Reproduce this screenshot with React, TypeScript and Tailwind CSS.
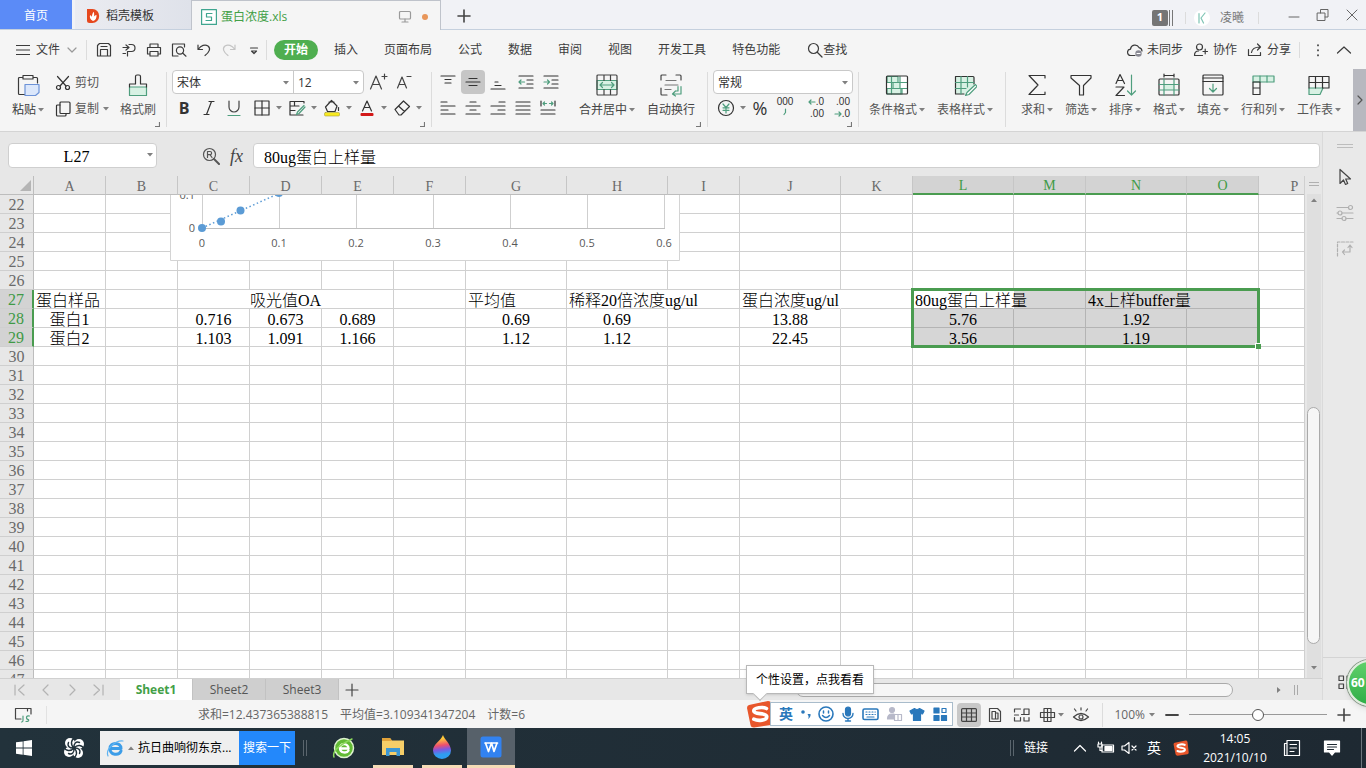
import React, { useState } from 'react';
import clsx from 'clsx';

const sheetFont = "font-['Liberation_Serif','Noto_Sans_CJK_SC',serif]";

interface SvgProps {
  w?: number;
  h?: number;
  children: React.ReactNode;
  className?: string;
}

const Svg: React.FC<SvgProps> = ({ w = 16, h = 16, children, className }) => (
  <svg
    width={w}
    height={h}
    viewBox={`0 0 ${w} ${h}`}
    fill="none"
    stroke="currentColor"
    strokeWidth="1.2"
    strokeLinecap="round"
    strokeLinejoin="round"
    aria-hidden="true"
    className={clsx('shrink-0', className)}
  >
    {children}
  </svg>
);

const Caret = ({ className }: { className?: string }) => (
  <svg width="6" height="4" viewBox="0 0 6 4" className={clsx('shrink-0', className)} aria-hidden="true">
    <path d="M0 0h6L3 3.6z" fill="#808080" />
  </svg>
);

const green = '#4f9e7e';
const mint = '#d8f1e4';

const Divider = ({ className }: { className?: string }) => (
  <div className={clsx('w-px shrink-0 bg-[#dcdcdc]', className)} />
);

// ---------- title bar ----------

const SogouLogo = ({ size }: { size: number }) => (
  <svg width={size} height={size} viewBox="0 0 28 28" className="shrink-0" aria-hidden="true">
    <path d="M3 5 22 1q3 0 3.400 2.500L27.500 22q0 2.500-2.500 3L8 27.500q-3 0-3.500-2.500L1 8q0-2.500 2-3z" fill="#e8562b" />
    <path
      d="M20.500 8.500C17 6.600 7.500 7.400 7.800 11c.4 3.800 12.800 1.400 13 5.600.2 4-8.800 4.600-13 2.600"
      fill="none"
      stroke="#fff"
      strokeWidth="3.600"
      strokeLinecap="round"
    />
  </svg>
);

const TitleBar = () => (
  <header className="flex h-[30px] shrink-0 items-stretch border-b border-[#c5d0de] bg-[#f1f2f6] text-xs text-[#333]">
    <button className="w-[72px] bg-[#5b8bf7] pt-0.5 text-white">首页</button>
    <button className="ml-[3px] flex w-[116px] items-center gap-1 bg-gradient-to-r from-[#ebecf1] to-[#dfe2ea] pt-0.5 pl-[11px]">
      <Svg className="stroke-none">
        <path d="M2 1h5.500a6.500 6.800 0 0 1 0 14H4.500A2.500 2.500 0 0 1 2 12.500z" transform="translate(-1)" fill="#e6481e" />
        <path d="M7 13C4 11.500 3.500 9 4 7.300c1.200.4 1.800 1 2 2C5.800 7 6.500 5 7.800 3.700c.5 2 .5 3.500 0 5 .8-1 1.500-1.500 2.700-1.700C10.800 10 9.500 12.400 7 13z" fill="#fff" />
      </Svg>
      稻壳模板
    </button>
    <div className="-mb-px flex w-[250px] items-center border-x border-t border-[#bfc3cb] bg-[#f5f5f5] pt-0.5 pl-[9px] text-[#43a047]">
      <Svg className="text-[#3fa58f]">
        <rect x=".6" y=".6" width="14.800" height="14.800" fill="#fff" />
        <path d="M11 4.500H5.500v3.500h5v3.500H5" />
      </Svg>
      <span className="ml-1">蛋白浓度.xls</span>
      <Svg w={14} h={13} className="ml-auto text-[#9a9a9a]">
        <rect x="1.500" y="1.500" width="11" height="7.500" rx="1" />
        <path d="M7 9v2.500M4 12h6" />
      </Svg>
      <span className="mr-3 ml-2.5 size-1.5 rounded-full bg-[#e8965a]" />
    </div>
    <button aria-label="新建" className="ml-[15px] flex items-center pt-0.5">
      <Svg className="text-[#444]">
        <path d="M2 8h12M8 2v12" strokeWidth="1.600" />
      </Svg>
    </button>
    <div className="mt-1.5 ml-auto flex items-center text-[#777]">
      <span className="flex h-4 w-4 items-center justify-center rounded-xs bg-[#757575] text-[11px] font-bold text-white">1</span>
      <span className="ml-px h-4 w-1 border-x border-[#777]" />
      <Divider className="mr-2 ml-3 h-3" />
      <Svg>
        <circle cx="8" cy="8" r="8" fill="#fff" stroke="none" />
        <path d="M5 3.500v9.500M11 3 7 8l2.500 5" stroke="#7ec4b4" />
      </Svg>
      <span className="ml-2.5">凌曦</span>
      <Divider className="ml-3.5 h-3" />
    </div>
    <div className="flex items-center gap-[15px] pr-[7px] pl-7 text-[#666]">
      <button aria-label="最小化">
        <Svg w={14} h={14}>
          <path d="M2 9h10" strokeWidth="1" />
        </Svg>
      </button>
      <button aria-label="还原">
        <Svg w={14} h={14}>
          <path d="M1.500 5h7.500v7.500H1.500zM4.500 5V1.500H12V9H9" strokeWidth="1" />
        </Svg>
      </button>
      <button aria-label="关闭">
        <Svg w={14} h={14}>
          <path d="m2 2 10 10M12 2 2 12" strokeWidth="1" />
        </Svg>
      </button>
    </div>
  </header>
);

// ---------- menu row ----------

const quickTools = [
  { label: '保存', icon: <><path d="M1.500 14V3.500l2-2h9l2 2V14zM4.500 14V7.500h7V14M5 4.500h6" /></> },
  { label: '输出为PDF', icon: <><path d="M2 5.500h5M5 3 8 5.500 5 8M8 2.500h2.500a3.500 3.500 0 0 1 0 7H6.500V14M2 11.500h2.500" /></> },
  { label: '打印', icon: <><path d="M4 5.500V2h8v3.500M4 12H1.500V5.500h13V12H12M4 9.500h8v4.500H4z" /></> },
  { label: '打印预览', icon: <><path d="M7 14H1.500V2h12v3" /><circle cx="9" cy="8.500" r="3.600" /><path d="m11.600 11 3.400 3.200" /></> },
  { label: '撤销', icon: <path d="M2 3v4.500h4.500M2.500 7C5 3.500 9 2 12 4c3 2.500 1.500 6-3 9.500" /> },
  { label: '恢复', icon: <path stroke="#c4c4c4" d="M14 3v4.500H9.500M13.500 7C11 3.500 7 2 4 4c-3 2.500-1.500 6 3 9.500" /> },
  { label: '自定义', icon: <path d="M4.500 6h7M5.500 9 8 11.500 10.500 9z" /> },
];

const menus = ['插入', '页面布局', '公式', '数据', '审阅', '视图', '开发工具', '特色功能'];

const MenuRow = () => (
  <nav className="flex h-[38px] shrink-0 items-center pt-0.5 text-xs whitespace-nowrap text-[#3c3c3c]">
    <button className="flex items-center pl-4">
      <Svg w={14}>
        <path d="M0 3.500h14M0 8h14M0 12.500h14" />
      </Svg>
      <span className="mx-1.5">文件</span>
      <Svg w={12} h={8} className="text-[#999]">
        <path d="m2 2 4 4 4-4" />
      </Svg>
    </button>
    <Divider className="ml-2 h-5" />
    <div className="flex pl-1">
      {quickTools.map(tool => (
        <button key={tool.label} aria-label={tool.label} className="flex w-[25px] justify-center">
          <Svg>{tool.icon}</Svg>
        </button>
      ))}
    </div>
    <Divider className="h-5" />
    <button className="ml-[7px] h-5 w-11 rounded-full bg-[#4fae50] font-bold text-white">开始</button>
    <div className="flex pl-[3px]">
      {menus.map(menu => (
        <button key={menu} className="px-[13px]">{menu}</button>
      ))}
    </div>
    <button className="ml-3.5 flex items-center">
      <Svg>
        <circle cx="6.500" cy="6.500" r="5" />
        <path d="m10.500 10.500 4.500 4.500" />
      </Svg>
      查找
    </button>
    <div className="ml-auto flex items-center gap-2.5">
      <button className="flex items-center gap-1">
        <Svg>
          <path d="M8 13.500H4a3.200 3.200 0 0 1-.5-6.400A4.500 4.500 0 0 1 12 5.600a3.800 3.800 0 0 1 3 3.400" />
          <circle cx="11.500" cy="11.500" r="3.200" fill="#8a8a94" stroke="none" />
          <path d="M10 11.500h3" stroke="#fff" />
        </Svg>
        未同步
      </button>
      <button className="flex items-center gap-1">
        <Svg>
          <circle cx="6.500" cy="5" r="3" />
          <path d="M9.500 13.500H1.500c0-3 2-4.500 4-4.500M10 9.500h4.500M12.200 7.200v4.600" />
        </Svg>
        协作
      </button>
      <button className="flex items-center gap-1">
        <Svg>
          <path d="M1.500 7.500v6h12v-3M4.500 10.500c.5-3.500 3-5.500 8.500-5.500M10.500 2 13.500 5l-3 3" />
        </Svg>
        分享
      </button>
    </div>
    <Divider className="ml-2 h-4" />
    <button aria-label="更多" className="ml-2.5">
      <Svg>
        <path d="M8 3v.5M8 8v.5M8 13v.5" strokeWidth="1.700" />
      </Svg>
    </button>
    <button aria-label="收起功能区" className="mr-3.5 ml-2.5">
      <Svg>
        <path d="m1.500 11 6.500-6 6.500 6" />
      </Svg>
    </button>
  </nav>
);

// ---------- ribbon ----------

interface BigButtonProps {
  label: string;
  caret?: boolean;
  children: React.ReactNode;
}

const BigButton: React.FC<BigButtonProps> = ({ label, caret, children }) => (
  <button className="flex shrink-0 flex-col items-center pt-[5px]">
    <Svg w={24} h={24}>{children}</Svg>
    <span className="mt-[5px] flex items-center gap-0.5 leading-4">
      {label}
      {caret && <Caret />}
    </span>
  </button>
);

interface ToolProps {
  label: string;
  caret?: boolean;
  active?: boolean;
  children: React.ReactNode;
}

const Tool: React.FC<ToolProps> = ({ label, caret, active, children }) => (
  <button
    aria-label={label}
    className={clsx(
      'flex h-6 items-center justify-center rounded-sm',
      caret ? 'w-[35px] gap-1' : 'w-6',
      active && 'bg-[#c6c6c6]'
    )}
  >
    <Svg w={20} h={20}>{children}</Svg>
    {caret && <Caret />}
  </button>
);

const Corner = () => (
  <Svg w={5} h={5} className="absolute right-1.5 bottom-1 text-[#777]">
    <path d="M4.500 0v4.500H0" />
  </Svg>
);

const Group = ({ className, corner, children }: { className?: string; corner?: boolean; children: React.ReactNode }) => (
  <div className={clsx('relative flex shrink-0 pt-0.5', className)}>
    {children}
    {corner && <Corner />}
  </div>
);

const Picker = ({ label, value, className }: { label: string; value: string; className?: string }) => (
  <label className={clsx('relative flex', className)}>
    <select aria-label={label} className="w-full appearance-none bg-transparent pt-px pl-1 text-xs text-[#333] outline-none">
      <option>{value}</option>
    </select>
    <Caret className="absolute top-2.5 right-1" />
  </label>
);

const Ribbon = () => (
  <section className="flex h-16 shrink-0 overflow-hidden border-b border-[#d4d4d4] text-xs whitespace-nowrap text-[#555]">
    <Group corner className="w-[166px] gap-[11px] pl-3">
      <div className="-mt-0.5 flex text-[#3a3a3a]">
        <BigButton label="粘贴" caret>
          <path d="M7 4.500H3.500a1 1 0 0 0-1 1v15a1 1 0 0 0 1 1H9M17 4.500h3.500a1 1 0 0 1 1 1V10M7 2.500h10V6H7z" />
          <path d="M9 11.500h14v8l-3.500 3H9z" fill="#dbe7fb" stroke="#6d93d8" />
        </BigButton>
      </div>
      <div className="flex flex-col gap-0.5">
        <button className="flex h-6 items-center gap-1 pt-px">
          <Svg className="text-[#333]">
            <circle cx="3.500" cy="12.500" r="2" />
            <circle cx="12.500" cy="12.500" r="2" />
            <path d="M2.500 1.500 11 11M13.500 1.500 5 11" />
          </Svg>
          剪切
        </button>
        <button className="flex h-6 items-center gap-1 pt-px">
          <Svg className="text-[#333]">
            <rect x="5" y="1" width="10" height="11.500" rx="1" />
            <path d="M5 4H2.500a1 1 0 0 0-1 1v9a1 1 0 0 0 1 1H10a1 1 0 0 0 1-1v-1.500" />
          </Svg>
          复制
          <Caret />
        </button>
      </div>
      <div className="-mt-0.5 flex">
        <BigButton label="格式刷">
          <path d="M3.500 14h17v8.500h-17z" fill={mint} stroke={green} />
          <path d="M3.500 14v-3h6V3.500q0-1.500 1.500-1.500h2q1.500 0 1.500 1.500V11h6v3" stroke="#333" />
        </BigButton>
      </div>
    </Group>
    <Divider className="my-1" />

    <Group corner className="w-[264px] flex-col gap-0.5 pl-[5px]">
      <div className="flex items-center">
        <div className="flex h-6 rounded border border-[#c9c9c9] bg-white">
          <Picker label="字体" value="宋体" className="w-[121px] border-r border-[#c9c9c9]" />
          <Picker label="字号" value="12" className="w-[69px]" />
        </div>
        <div className="ml-0.5 flex gap-0.5">
          <Tool label="增大字号">
            <path d="M2.500 17 8 4l5.500 13M4.500 12.500h7M14 4.500h5M16.500 2v5" stroke="#444" />
          </Tool>
          <Tool label="减小字号">
            <path d="M3.500 16 8 5l4.500 11M5 12.500h6M13 4.500h4" stroke="#444" />
          </Tool>
        </div>
      </div>
      <div className="flex">
        <div className="flex gap-px">
          <button aria-label="加粗" className="h-6 w-6 text-base leading-6 font-bold text-[#333]">B</button>
          <Tool label="倾斜">
            <path d="M10 3.500h5M5 16.500h5M12.500 3.500l-5 13" stroke="#333" />
          </Tool>
          <Tool label="下划线">
            <path d="M5 3v6a5 5 0 0 0 10 0V3" stroke="#444" />
            <path d="M4 17.500h12" stroke={green} />
          </Tool>
        </div>
        <div className="ml-[3px] flex text-[#333]">
          <Tool label="边框" caret>
            <rect x="3" y="3" width="14" height="14" />
            <path d="M10 3v14M3 10h14" />
          </Tool>
          <Tool label="绘图边框" caret>
            <path d="M17 5V3.500H3V17h13M3 8h9M3 12.500h5M7.500 3.500V8" />
            <path d="M17 7.500 10.500 14l-1 2.500 2.500-1L18 9" stroke={green} />
          </Tool>
          <Tool label="填充颜色" caret>
            <path d="m9.500 2.500 5.500 5.500-2 5.500H5.500L3.500 9zM7 4h5" />
            <path d="M16.500 9.500v3" />
            <rect x="2.500" y="14.500" width="15" height="3.500" rx="1" fill="#f8ea20" stroke="#a8a040" strokeWidth=".6" />
          </Tool>
          <Tool label="字体颜色" caret>
            <path d="M5.500 13 10 3l4.500 10M7 9.500h6" />
            <rect x="3.500" y="15" width="13" height="3" rx="1" fill="#d31818" stroke="none" />
          </Tool>
          <Tool label="清除" caret>
            <path d="m3 11.500 8.500-8.500 6 5.500L9 17H7zM6.500 8l6 5.500" />
          </Tool>
        </div>
      </div>
    </Group>
    <Divider className="my-1" />

    <Group corner className="w-[275px] pl-1">
      <div className="flex flex-col gap-0.5 text-[#333]">
        <div className="flex gap-px">
          <Tool label="顶端对齐"><path d="M3 4h14M7 7.500h6M7 11h6" /></Tool>
          <Tool label="垂直居中" active><path d="M3 10h14M6 6.500h8M6 13.500h8" /></Tool>
          <Tool label="底端对齐"><path d="M3 17h14M7 13.500h6M7 10h3" /></Tool>
          <div className="ml-[3px] flex gap-px">
            <Tool label="减少缩进">
              <path d="M3 4h14M11 8h6M11 12h6M3 16h14" />
              <path d="M3 10h5.500M5 8l-2 2 2 2" stroke={green} />
            </Tool>
            <Tool label="增加缩进">
              <path d="M3 4h14M11 8h6M11 12h6M3 16h14" />
              <path d="M3 10h5.500M6.500 8l2 2-2 2" stroke={green} />
            </Tool>
          </div>
        </div>
        <div className="flex gap-px">
          <Tool label="左对齐"><path d="M3 4h6M3 8h14M3 12h7M3 16h14" /></Tool>
          <Tool label="居中"><path d="M7 4h6M3 8h14M7 12h6M3 16h14" /></Tool>
          <Tool label="右对齐"><path d="M11 4h6M3 8h14M10 12h7M3 16h14" /></Tool>
          <Tool label="两端对齐"><path d="M3 4h14M3 8h14M3 12h14M3 16h14" /></Tool>
          <Tool label="分散对齐">
            <path d="M3 3v5M17 3v5M3 12h14M3 16h14" />
            <path d="M5 5.500h3.500M11.500 5.500H15M6.500 4 5 5.500 6.500 7M13.500 4 15 5.500 13.500 7" stroke={green} />
          </Tool>
        </div>
      </div>
      <div className="-mt-0.5 ml-4 flex gap-3 text-[#444]">
        <BigButton label="合并居中" caret>
          <path d="M2 7.500h20v9H2z" fill={mint} stroke={green} />
          <path d="M3 2h18a1 1 0 0 1 1 1v18a1 1 0 0 1-1 1H3a1 1 0 0 1-1-1V3a1 1 0 0 1 1-1zM9 2v5.500M15.500 2v5.500M9 16.500V22M15.500 16.500V22" />
          <path d="M5 12h14M7.500 9.500 5 12l2.500 2.500M16.500 9.500 19 12l-2.500 2.500" stroke={green} />
        </BigButton>
        <BigButton label="自动换行">
          <path d="M7 2H3a1 1 0 0 0-1 1v4M2 15v6a1 1 0 0 0 1 1h5M17 2h4a1 1 0 0 1 1 1v4" />
          <path d="M7 7.500h10M6 12h13M6 16.500h6" stroke="#777" />
          <path d="M22 13.500V21h-8.500M16.500 18 13.500 21l3 2M19 13.500v4.500h-2.500" stroke={green} />
        </BigButton>
      </div>
    </Group>
    <Divider className="my-1" />

    <Group corner className="w-[150px] flex-col gap-0.5 pl-[5px]">
      <Picker label="数字格式" value="常规" className="h-6 w-[140px] rounded border border-[#c9c9c9] bg-white" />
      <div className="flex text-[#333]">
        <Tool label="货币" caret>
          <circle cx="10" cy="10" r="7.500" />
          <path d="m7 6 3 3.500L13 6M10 9.500V15M7 9.800h6M7 12.300h6" stroke={green} />
        </Tool>
        <button aria-label="百分比" className="h-6 w-6 text-lg leading-6">%</button>
        <button aria-label="千位分隔" className="flex h-6 w-[26px] flex-col items-center font-['Liberation_Sans',sans-serif] text-[10px] leading-3">
          000
          <Svg w={4} h={8}>
            <path d="M2.500 1v3.500L1 6.500" stroke={green} />
          </Svg>
        </button>
        <button aria-label="增加小数位" className="flex h-6 w-[26px] flex-col items-end font-['Liberation_Sans',sans-serif] text-[10px] leading-3">
          <span className="flex items-center">
            <Svg w={8} h={8}>
              <path d="M7 4H1M3 2 1 4l2 2" stroke={green} />
            </Svg>
            .0
          </span>
          <span>.00</span>
        </button>
        <button aria-label="减少小数位" className="flex h-6 w-[26px] flex-col items-end font-['Liberation_Sans',sans-serif] text-[10px] leading-3">
          <span>.00</span>
          <span className="flex items-center">
            <Svg w={8} h={8}>
              <path d="M1 4h6M5 2l2 2-2 2" stroke={green} />
            </Svg>
            .0
          </span>
        </button>
      </div>
    </Group>
    <Divider className="my-1" />

    <div className="flex w-[146px] shrink-0 gap-3 pl-2.5">
      <BigButton label="条件格式" caret>
        <rect x="1.500" y="3" width="21" height="18" rx="1" fill="#fff" stroke="none" />
        <path d="M2 3.500h11v6H2zM8 9.500h7v6H8zM2 15.500h14V21H2z" fill={mint} stroke={green} />
        <path d="M6.500 3.500V21M2 9.500h20M2 15.500h20M15 9.500V3.500M17 15.500V21" stroke={green} />
        <rect x="1.500" y="3" width="21" height="18" rx="1" stroke="#333" />
      </BigButton>
      <BigButton label="表格样式" caret>
        <path d="M2 3.500h19V14l-6 7H2z" fill={mint} stroke="none" />
        <path d="M21 11V4.500a1 1 0 0 0-1-1H2.500V21H11" stroke="#333" />
        <path d="M8 3.500V21M14.500 3.500V14M2.500 9.500H21M2.500 15.500H13" stroke={green} />
        <path d="m22.500 11.500-8.500 8-1.500 3 3.500-1 8-8z" fill="#fff" stroke={green} />
      </BigButton>
    </div>
    <Divider className="my-1" />

    <div className="flex min-w-0 flex-1 gap-3 overflow-hidden pl-[15px]">
      <BigButton label="求和" caret>
        <path d="M20 5V2.500H4L13 12l-9 9.500h16V19" stroke="#333" />
      </BigButton>
      <BigButton label="筛选" caret>
        <path d="M2 2.500h20v2.500l-7.500 7.500v9.500h-4v-9.500L2 5z" stroke="#333" />
      </BigButton>
      <BigButton label="排序" caret>
        <path d="M3 10.500 7 1.500l4.500 9M4.500 7.500h5M3 14h8L3 22.500h8.500" stroke="#333" />
        <path d="M18.500 2v20M14.500 18l4 4 4-4" stroke={green} />
      </BigButton>
      <BigButton label="格式" caret>
        <path d="M7 11.500h10v5.500H7z" fill={mint} stroke="none" />
        <path d="M7 2.500h10M7 1v3M17 1v3" stroke="#333" />
        <rect x="2" y="6" width="20" height="16" rx="1" stroke="#333" />
        <path d="M2 11.500h20M2 17h20M7 6v16M17 6v16" stroke={green} />
      </BigButton>
      <BigButton label="填充" caret>
        <rect x="2" y="2" width="20" height="20" rx="1" stroke="#333" />
        <path d="M2 5h20M2 8.500h20" stroke="#333" />
        <path d="M12 11v8M8.500 15.500 12 19l3.500-3.500" stroke={green} />
      </BigButton>
      <BigButton label="行和列" caret>
        <path d="M2 3h21v6H2z" fill={mint} stroke={green} />
        <path d="M9 3v6M16 3v6" stroke={green} />
        <path d="M2 9h7v12.500H2zM2 15h7" stroke="#333" />
      </BigButton>
      <BigButton label="工作表" caret>
        <path d="M2 15h14l-3 6.500H2z" fill={mint} stroke={green} />
        <path d="M2 15V3.500h20V15h-6M2 9.500h20M8.500 3.500V15M15.500 3.500V15" stroke="#333" />
      </BigButton>
    </div>
    <button aria-label="向右滚动" className="mt-px flex w-[13px] shrink-0 items-center justify-center bg-[#b7b8bf]">
      <Svg w={6} h={10} className="text-[#555]">
        <path d="m1 1 4 4-4 4" />
      </Svg>
    </button>
  </section>
);

// ---------- formula bar ----------

const FormulaBar = () => {
  const [value, setValue] = useState('80ug蛋白上样量');
  return (
    <div className="flex items-center pt-[11px] pr-[2px] pb-2 pl-2">
      <div className="relative flex">
        <input
          aria-label="名称框"
          defaultValue="L27"
          className={clsx('h-[25px] w-[149px] rounded border border-[#cfcfcf] bg-white pt-0.5 pr-3 text-center text-base text-black outline-none', sheetFont)}
        />
        <Caret className="absolute top-2.5 right-1" />
      </div>
      <Svg w={18} h={18} className="ml-[45px] text-[#555]">
        <circle cx="7.500" cy="7.500" r="6" />
        <path d="m12 12 5 5" strokeWidth="2" />
        <path d="M5.500 10.500v-6H8a1.600 1.600 0 0 1 0 3.200H5.500M8 7.700l2 2.800" />
      </Svg>
      <span className="ml-2.5 w-4 font-['Liberation_Serif',serif] text-lg leading-5 text-[#444] italic">fx</span>
      <input
        aria-label="编辑栏"
        value={value}
        onChange={e => setValue(e.target.value)}
        className={clsx('ml-[7px] h-[25px] min-w-0 flex-1 rounded border border-[#cfcfcf] bg-white pl-2.5 text-base font-light text-black outline-none', sheetFont)}
      />
    </div>
  );
};

// ---------- grid ----------

const columns = [
  { name: 'A', width: 72 },
  { name: 'B', width: 72 },
  { name: 'C', width: 72 },
  { name: 'D', width: 72 },
  { name: 'E', width: 72 },
  { name: 'F', width: 72 },
  { name: 'G', width: 101 },
  { name: 'H', width: 101 },
  { name: 'I', width: 72 },
  { name: 'J', width: 101 },
  { name: 'K', width: 72 },
  { name: 'L', width: 101 },
  { name: 'M', width: 72 },
  { name: 'N', width: 101 },
  { name: 'O', width: 72 },
  { name: 'P', width: 72 },
];

interface Cell {
  text: string;
  left?: boolean;
  spill?: boolean;
  span?: number;
}

const cells: Record<string, Cell> = {
  A27: { text: '蛋白样品', left: true },
  C27: { text: '吸光值OA', span: 3 },
  G27: { text: '平均值', left: true },
  H27: { text: '稀释20倍浓度ug/ul', left: true, spill: true },
  J27: { text: '蛋白浓度ug/ul', left: true, spill: true },
  L27: { text: '80ug蛋白上样量', left: true, spill: true },
  N27: { text: '4x上样buffer量', left: true, spill: true },
  A28: { text: '蛋白1' },
  C28: { text: '0.716' },
  D28: { text: '0.673' },
  E28: { text: '0.689' },
  G28: { text: '0.69' },
  H28: { text: '0.69' },
  J28: { text: '13.88' },
  L28: { text: '5.76' },
  N28: { text: '1.92' },
  A29: { text: '蛋白2' },
  C29: { text: '1.103' },
  D29: { text: '1.091' },
  E29: { text: '1.166' },
  G29: { text: '1.12' },
  H29: { text: '1.12' },
  J29: { text: '22.45' },
  L29: { text: '3.56' },
  N29: { text: '1.19' },
};

const rows = Array.from({ length: 26 }, (_, i) => i + 22);
const isSelectedRow = (row: number) => row >= 27 && row <= 29;
const isSelectedCol = (col: string) => 'LMNO'.includes(col);

const chartTicks = ['0', '0.1', '0.2', '0.3', '0.4', '0.5', '0.6'];

const Chart = () => (
  <svg
    width="510"
    height="66"
    viewBox="0 0 510 66"
    className="absolute top-[19px] left-[170px] bg-white font-['Open_Sans',sans-serif] text-[11px]"
    aria-label="标准曲线"
  >
    <path d="M.5 0v65.500h509V0" fill="none" stroke="#d4d4d4" />
    {chartTicks.map((tick, i) => (
      <g key={tick}>
        <path d={`M${32.5 + i * 77} 0v33`} stroke="#cfcfcf" />
        <text x={32 + i * 77} y="52" textAnchor="middle" fill="#595959">{tick}</text>
      </g>
    ))}
    <path d="M32 33.500h463" stroke="#bfbfbf" />
    <text x="25" y="37" textAnchor="end" fill="#595959">0</text>
    <text x="25" y="4" textAnchor="end" fill="#595959">0.1</text>
    <path d="M32 33 110-2" stroke="#5b9bd5" strokeWidth="1.500" strokeDasharray="1.500 2.500" />
    <g fill="#5b9bd5">
      <circle cx="32" cy="33" r="4" />
      <circle cx="51" cy="26.500" r="4" />
      <circle cx="70.500" cy="15.500" r="4" />
      <circle cx="109" cy="-2" r="4" />
    </g>
  </svg>
);

const Grid = () => (
  <div className={clsx('relative min-h-0 min-w-0 flex-1 overflow-hidden bg-white text-base text-black', sheetFont)}>
    <table className="w-px table-fixed border-separate border-spacing-0">
      <colgroup>
        <col style={{ width: 34 }} />
        {columns.map(col => (
          <col key={col.name} style={{ width: col.width }} />
        ))}
      </colgroup>
      <thead>
        <tr>
          <th className="h-[19px] border-r border-b border-[#bdbdbd] bg-[#e7e7e7] p-0">
            <svg width="11" height="11" viewBox="0 0 11 11" className="mr-0.5 ml-auto" aria-hidden="true">
              <path d="M11 0v11H0z" fill="#b5b5b5" />
            </svg>
          </th>
          {columns.map(col => (
            <th
              key={col.name}
              scope="col"
              className={clsx(
                'h-[19px] border-r border-r-[#c6c6c6] p-0 pt-0.5 text-sm leading-[15px] font-normal',
                isSelectedCol(col.name)
                  ? 'border-b-2 border-b-[#4a9c50] bg-[#d3d3d3] text-[#3f9a46]'
                  : 'border-b border-b-[#bdbdbd] bg-[#e7e7e7] text-[#6a6a6a]'
              )}
            >
              {col.name}
            </th>
          ))}
        </tr>
      </thead>
      <tbody>
        {rows.map(row => {
          let skip = 0;
          return (
            <tr key={row}>
              <th
                scope="row"
                className={clsx(
                  'h-[19px] border-b border-b-[#cfcfcf] p-0 pt-0.5 leading-4 font-normal',
                  isSelectedRow(row)
                    ? 'border-r-2 border-r-[#4a9c50] bg-[#d3d3d3] text-[#3f9a46]'
                    : 'border-r border-r-[#bdbdbd] bg-[#e7e7e7] text-[#6a6a6a]'
                )}
              >
                {row}
              </th>
              {columns.map(col => {
                if (skip > 0) {
                  skip--;
                  return null;
                }
                const id = `${col.name}${row}`;
                const cell = cells[id];
                skip = (cell?.span ?? 1) - 1;
                const selected = isSelectedRow(row) && isSelectedCol(col.name);
                return (
                  <td
                    key={id}
                    colSpan={cell?.span}
                    className={clsx(
                      'h-[19px] border-r border-b p-0',
                      selected ? 'border-[#b4b4b4]' : 'border-[#d0d0d0]',
                      selected && id !== 'L27' && 'bg-[#d6d6d6]',
                      cell?.spill && (id === 'N27' ? 'border-r-[#d6d6d6]' : 'border-r-white')
                    )}
                  >
                    {cell && (
                      <div className={clsx('flex h-[18px] pt-px leading-5 font-light whitespace-nowrap', cell.left ? 'pl-0.5' : 'justify-center')}>
                        {cell.text}
                      </div>
                    )}
                  </td>
                );
              })}
            </tr>
          );
        })}
      </tbody>
    </table>
    <Chart />
    <div className="pointer-events-none absolute top-[112px] left-[911px] h-[60px] w-[349px] border-3 border-[#4a9c50]">
      <span className="absolute -right-1 -bottom-1 size-1.5 border-t border-l border-white bg-[#4a9c50]" />
    </div>
  </div>
);

const VerticalScroll = () => (
  <div className="flex w-[18px] shrink-0 flex-col items-center border-l border-[#d0d0d0] bg-[#e7e7e7]">
    <div className="mt-1.5 h-1 w-2.5 border-y border-[#b0b0b0]" />
    <div className="mt-2 flex min-h-0 w-[14px] flex-1 flex-col items-center bg-[#dfdfdf]">
      <Caret className="mt-1 rotate-180" />
      <div className="flex-[206]" />
      <div className="w-[13px] flex-[236] rounded-full border border-[#aaa] bg-[#f6f6f6]" />
      <div className="flex-[22]" />
      <Caret className="mb-2" />
    </div>
  </div>
);

// ---------- sheet tabs ----------

const navIcons = [
  { label: '第一张', d: 'M2 2v10M11 2 5.500 7l5.500 5' },
  { label: '上一张', d: 'M9 2 4 7l5 5' },
  { label: '下一张', d: 'm5 2 5 5-5 5' },
  { label: '最后一张', d: 'M12 2v10M3 2l5.500 5L3 12' },
];

const SheetTabs = () => {
  const [active, setActive] = useState('Sheet1');
  return (
    <div className="flex h-[22px] shrink-0 items-stretch border-t border-[#d0d0d0] text-xs text-[#555]">
      <div className="flex w-[120px] items-center gap-3 pl-[13px] text-[#b3b3b3]">
        {navIcons.map(nav => (
          <button key={nav.label} aria-label={nav.label}>
            <Svg w={14} h={14}>
              <path d={nav.d} />
            </Svg>
          </button>
        ))}
      </div>
      {['Sheet1', 'Sheet2', 'Sheet3'].map(name => (
        <button
          key={name}
          onClick={() => setActive(name)}
          className={clsx(
            'w-[73px] border-r border-[#c2c2c2]',
            active === name ? 'bg-white font-bold text-[#43a047]' : 'bg-[#cfcfcf]'
          )}
        >
          {name}
        </button>
      ))}
      <button aria-label="新建工作表" className="ml-1.5 flex items-center text-[#444]">
        <Svg w={14} h={14}>
          <path d="M1 7h12M7 1v12" />
        </Svg>
      </button>
      <div className="ml-auto flex items-center">
        <div className="h-3.5 w-[437px] rounded-full border border-[#aaa] bg-[#f6f6f6]" />
        <Caret className="ml-[43px] -rotate-90" />
        <div className="mr-6 ml-3 h-2.5 w-1 border-x border-[#aaa]" />
      </div>
    </div>
  );
};

// ---------- input method bar ----------

const ImeBar = () => (
  <div className="absolute bottom-0 left-[746px] text-xs">
    <div className="absolute bottom-[34px] left-0 flex h-[29px] w-32 items-center justify-center border border-[#b8b8b8] bg-white whitespace-nowrap text-black shadow">
      个性设置，点我看看
      <span className="absolute -bottom-1.5 left-2 size-2.5 rotate-45 border-r border-b border-[#b8b8b8] bg-white" />
    </div>
    <div className="flex items-center">
      <SogouLogo size={28} />
      <div className="-ml-1 flex h-6 w-[183px] items-center justify-between border border-[#a9bccb] bg-white pr-1 pl-2 text-[#2a78bb]">
        <span className="text-sm font-bold">英</span>
        <Svg w={12} className="stroke-none">
          <circle cx="3" cy="6" r="1.800" fill="currentColor" />
          <path d="M7.500 8h3q.5 3-2.500 5 1-2 .5-3z" fill="currentColor" />
        </Svg>
        <Svg>
          <circle cx="8" cy="8" r="7" strokeWidth="1.600" />
          <path d="M5.500 5v2M10.500 5v2M4.500 9.500q3.500 4 7 0" strokeWidth="1.500" />
        </Svg>
        <Svg w={14}>
          <rect x="4.500" y="1" width="5" height="9" rx="2.500" fill="currentColor" />
          <path d="M2 7.500a5 5 0 0 0 10 0M7 12.500V15M4.500 15h5" strokeWidth="1.400" />
        </Svg>
        <Svg w={17}>
          <rect x="1" y="3" width="15" height="10.500" rx="1.500" strokeWidth="1.600" />
          <path d="M4 6h1M7 6h1M10 6h1M13 6h.3M4 8.500h1M7 8.500h1M10 8.500h1M13 8.500h.3M5 11h7" />
        </Svg>
        <Svg w={17} className="text-[#b7b9c9]">
          <circle cx="6" cy="4" r="2.500" fill="currentColor" />
          <path d="M1.500 13q0-5 4.500-5h2v5z" fill="currentColor" />
          <path d="M8.500 8.500h7v6h-7zM12 8.500v6" fill="#fff" />
        </Svg>
        <Svg>
          <path d="M5.500 2.500q2.500 2 5 0L15 5l-1.500 3-2-.5v7h-7v-7l-2 .5L1 5z" fill="currentColor" />
        </Svg>
        <Svg>
          <path d="M2 2h5v5H2zM2 9.500h5v5H2zM9.500 9.500h5v5h-5z" fill="currentColor" />
          <path d="M10 2.500h4v4h-4z" />
        </Svg>
      </div>
    </div>
  </div>
);

// ---------- status bar ----------

const StatusBar = () => {
  const [zoom, setZoom] = useState(50);
  return (
    <footer className="relative flex h-7 shrink-0 items-center bg-[#f5f5f5] pt-px text-xs text-[#666]">
      <div className="flex w-[47px] justify-center border-r border-[#e2e2e2]">
        <Svg w={18} h={18} className="text-[#444]">
          <path d="M7 13H1.500V2.500h12V5M13.500 2.500H17V8" />
          <path d="M9 10v4.500q0 1.500-1.500 1.500M15.500 10q-3-.5-3 1.500t2 2q1 2-2.500 2" stroke={green} />
        </Svg>
      </div>
      <p className="ml-[151px] flex gap-3 whitespace-nowrap">
        <span>求和=12.437365388815</span>
        <span>平均值=3.109341347204</span>
        <span>计数=6</span>
      </p>
      <div className="ml-auto flex items-center text-[#444]">
        <button aria-label="普通视图" className="flex size-6 items-center justify-center rounded-sm bg-[#c8c8c8]">
          <Svg>
            <rect x=".6" y="1.600" width="14.800" height="12.800" rx="1" />
            <path d="M.6 6h14.800M.6 10h14.800M5.500 1.600v12.800M10.500 1.600v12.800" />
          </Svg>
        </button>
        <button aria-label="页面布局" className="ml-1.5">
          <Svg>
            <path d="M2.500 1.500h8l3 3v10h-11zM5 4.500h3.500v7.500H5zM8.500 6H11v6H8.500" />
          </Svg>
        </button>
        <button aria-label="分页预览" className="ml-2.5">
          <Svg w={18}>
            <path d="M1.500 5V2h6M11 2h5v5.500H8.500M11 2v5.500M1.500 8h4M1.500 10.500V14h6M7.500 10.500V14M11 14h5v-3.500M11 10.500V14" />
          </Svg>
        </button>
        <button aria-label="阅读模式" className="ml-2 flex items-center gap-0.5">
          <Svg w={17}>
            <path d="M5 1.500h7v13H5zM1.500 5.500h14v5h-14zM8.500 1.500v13" />
          </Svg>
          <Caret />
        </button>
        <button aria-label="护眼模式" className="ml-2">
          <Svg w={18}>
            <path d="M1.500 10q7.500-7 15 0-7.500 7-15 0zM4 4 2.500 2M9 3V.800M14 4l1.500-2" />
            <circle cx="9" cy="10" r="2" />
          </Svg>
        </button>
        <Divider className="ml-3 h-6" />
        <span className="ml-[11px] text-[#666]">100%</span>
        <Caret className="ml-1" />
        <button aria-label="缩小" className="ml-2.5">
          <Svg w={14} h={14}>
            <path d="M1 7h12" strokeWidth="1.800" />
          </Svg>
        </button>
        <input
          type="range"
          aria-label="缩放"
          value={zoom}
          onChange={e => setZoom(Number(e.target.value))}
          className="mx-2.5 h-px w-[138px] appearance-none bg-[#999] [&::-webkit-slider-thumb]:size-3 [&::-webkit-slider-thumb]:appearance-none [&::-webkit-slider-thumb]:rounded-full [&::-webkit-slider-thumb]:border [&::-webkit-slider-thumb]:border-[#555] [&::-webkit-slider-thumb]:bg-white"
        />
        <button aria-label="放大" className="mr-[15px]">
          <Svg w={14} h={14}>
            <path d="M1 7h12M7 1v12" strokeWidth="1.600" />
          </Svg>
        </button>
      </div>
      <ImeBar />
    </footer>
  );
};

// ---------- side bar ----------

const SideBar = () => (
  <aside className="flex w-11 shrink-0 flex-col items-center border-l border-[#dadada] bg-[#e9e9e9] text-[#b0b0b0]">
    <div className="mt-3 h-1 w-4 border-y border-[#bdbdbd]" />
    <button aria-label="选择" className="mt-5 text-[#444]">
      <Svg w={18} h={18}>
        <path d="M4 1.500v14l3.500-3.500 2 4.500 2.200-1-2-4.500h4.800z" />
      </Svg>
    </button>
    <button aria-label="属性" className="mt-[18px]">
      <Svg w={18} h={18}>
        <path d="M1 3.500h11M1 9h1M6 9h11M1 14.500h5M10 14.500h7" />
        <circle cx="14.500" cy="3.500" r="2" />
        <circle cx="4" cy="9" r="2" />
        <circle cx="8" cy="14.500" r="2" />
      </Svg>
    </button>
    <button aria-label="转换" className="mt-[18px]">
      <Svg w={18} h={18}>
        <path d="M1.500 16V2H17" strokeDasharray="3 1.500" />
        <path d="M14 5.500V12H6.500M12 7.500l2-2.500 2 2.500M8.500 10l-2 2 2 2.500" />
      </Svg>
    </button>
    <div className="mt-auto flex h-[43px] w-full items-center justify-center border-t border-[#d4d4d4] pt-1.5 text-[#444]">
      <Svg>
        <rect x="2" y="2" width="4.500" height="4.500" />
        <rect x="2" y="10" width="4.500" height="4.500" />
        <rect x="10" y="2" width="4.500" height="4.500" />
        <rect x="10" y="10" width="4.500" height="4.500" />
      </Svg>
    </div>
  </aside>
);

// ---------- task bar ----------

const apps = [
  {
    label: '360浏览器',
    state: 'mr-[9px] w-10',
    icon: (
      <>
        <circle cx="12" cy="12" r="9.500" fill="#62bb35" stroke="#dff3d0" strokeWidth="1.500" />
        <path d="M16.500 14.500c-1.500 3-8.500 3-8.500-2.500s8.500-5 8.500.5H8" fill="none" stroke="#fff" strokeWidth="2.400" />
        <path d="M2 21Q-1 13 20 3" fill="none" stroke="#8bd95c" strokeWidth="1.500" />
      </>
    ),
  },
  {
    label: '文件资源管理器',
    state: 'mr-[9px] w-10 border-b-3 border-[#f5dcb6]',
    icon: (
      <>
        <path d="M1 3h8l2 2.500h12V20H1z" fill="#f6ce68" stroke="none" />
        <path d="M1 3h8l2 3H1z" fill="#e2a33a" stroke="none" />
        <path d="M5 21v-8h14v8h-3.500v-4h-7v4z" fill="#3c97d3" stroke="none" />
      </>
    ),
  },
  {
    label: '火焰',
    state: 'mr-[5px] w-10 border-b-3 border-[#f5dcb6]',
    icon: (
      <>
        <defs>
          <linearGradient id="flame" x1=".5" y1="0" x2=".6" y2="1">
            <stop offset=".15" stopColor="#ffc93a" />
            <stop offset=".42" stopColor="#ee4f6c" />
            <stop offset=".6" stopColor="#7f58e0" />
            <stop offset=".8" stopColor="#2e9df0" />
          </linearGradient>
        </defs>
        <path d="M13 0c1 4 8 9 8 15.500a9 8.500 0 0 1-18 0C3 9 11 6 13 0z" fill="url(#flame)" stroke="none" />
      </>
    ),
  },
  {
    label: 'WPS',
    state: 'w-12 border-b-3 border-[#f5dcb6] bg-[#57616a]',
    icon: (
      <>
        <rect x="1.500" y="1.500" width="21" height="21" rx="2.500" fill="#3282f0" stroke="none" />
        <path d="M6 8h12.500M6.500 8l3 8.500 3-8.500 2.500 8.500L18 8" stroke="#fff" strokeWidth="1.700" />
      </>
    ),
  },
];

const TaskBar = () => (
  <div className="flex h-10 shrink-0 items-center bg-gradient-to-r from-[#22323b] to-[#1e2932] text-xs text-white">
    <button aria-label="开始" className="ml-4">
      <svg width="16" height="16" viewBox="0 0 16 16" fill="#fff" aria-hidden="true">
        <path d="M0 2.300 6.700 1.400v6.200H0zM7.500 1.300 16 0v7.600H7.500zM0 8.400h6.700v6.300L0 13.700zM7.500 8.400H16V16l-8.500-1.200z" />
      </svg>
    </button>
    <button aria-label="小组件" className="ml-[31px]">
      <Svg w={22} h={22}>
        <circle cx="7" cy="6" r="5" fill="#fff" stroke="none" />
        <circle cx="16" cy="7" r="5" fill="#fff" stroke="none" />
        <circle cx="6" cy="15" r="5" fill="#fff" stroke="none" />
        <circle cx="15" cy="16" r="5" fill="#fff" stroke="none" />
        <g stroke="#22323b" strokeWidth="1.400">
          <path d="M11 11C6.500 11.500 4 9 5.500 5.500M11 11C10.500 6.500 13 4 16.500 5.500M11 11c4.500-.5 7 2 5.500 5.500M11 11c.5 4.500-2 7-5.500 5.500" />
          <path d="M11 11C7 7.500 8 2.500 12 1M11 11c3.500-4 8.500-3 10 1M11 11c4 3.500 3 8.500-1 10M11 11c-3.500 4-8.500 3-10-1" />
        </g>
      </Svg>
    </button>
    <form className="ml-[15px] flex h-[34px] items-stretch" onSubmit={e => e.preventDefault()}>
      <div className="flex w-[139px] items-center bg-[#efefef] pl-1.5">
        <Svg w={18} h={18}>
          <path d="M15 12c-2 5-11 4.500-11-2.500S15 3 15 9.500H4.500" stroke="#3c9de8" strokeWidth="3" />
          <path d="M2 17C-1 10 10 1 17 2" stroke="#5fb4f2" strokeWidth="1.200" />
        </Svg>
        <Caret className="mx-1 rotate-180" />
        <input aria-label="搜索" defaultValue="抗日曲响彻东京..." className="w-[100px] bg-transparent text-xs text-black outline-none" />
      </div>
      <button className="w-14 bg-[#2388fb]">搜索一下</button>
    </form>
    <div className="ml-2 h-4 w-1 border-x border-[#5a656d]" />
    <div className="ml-[17px] flex h-full">
      {apps.map(app => (
        <button key={app.label} aria-label={app.label} className={clsx('flex items-center justify-center', app.state)}>
          <Svg w={24} h={24}>{app.icon}</Svg>
        </button>
      ))}
    </div>
    <div className="ml-auto flex items-center">
      <div className="h-4 w-1 border-x border-[#5a656d]" />
      <span className="ml-2.5">链接</span>
      <Svg w={14} h={14} className="ml-[25px]">
        <path d="m1.500 10 5.500-5.500 5.500 5.500" />
      </Svg>
      <Svg w={18} className="ml-2.5">
        <path d="M5 5h11.500v7H5z" />
        <path d="M8 6.500h7v4H8z" fill="currentColor" />
        <path d="M1.500 2v2M4.500 2v2M1 4h4v3H1zM3 7v3.500h2" />
      </Svg>
      <Svg className="ml-1.5">
        <path d="M1 6h2.500L8 2.500v11L3.500 10H1zM11 6l4 4M15 6l-4 4" />
      </Svg>
      <span className="ml-2.5 text-sm">英</span>
      <span className="ml-3">
        <SogouLogo size={16} />
      </span>
      <div className="ml-3 w-[68px] text-center leading-[19px]">
        <div>14:05</div>
        <div>2021/10/10</div>
      </div>
      <Svg w={18} h={18} className="ml-3.5">
        <path d="M4 1.500h12.500v15H4zM4 4.500H1.500v12H4M7 5.500h6.500M7 9h6.500M7 12.500h4" />
      </Svg>
      <Svg w={18} h={18} className="ml-[22px]">
        <path d="M1.500 2h15v11h-5l-2.500 3-2.500-3h-5z" fill="#fff" />
        <path d="M4.500 5.500h9M4.500 8h9M4.500 10.500h6" stroke="#1e2932" />
      </Svg>
      <div className="mr-1 ml-5 h-10 w-px bg-[#6b757c]" />
    </div>
  </div>
);

const App: React.FC = () => {
  return (
    <div className="relative flex h-screen flex-col overflow-hidden bg-[#f5f5f5] font-['Open_Sans','Noto_Sans_CJK_SC',sans-serif]">
      <TitleBar />
      <MenuRow />
      <Ribbon />
      <main className="flex min-h-0 flex-1 bg-[#e7e7e7]">
        <div className="flex min-w-0 flex-1 flex-col">
          <FormulaBar />
          <div className="flex min-h-0 flex-1">
            <Grid />
            <VerticalScroll />
          </div>
          <SheetTabs />
        </div>
        <SideBar />
      </main>
      <StatusBar />
      <TaskBar />
      <button className="absolute -right-[27px] bottom-[62px] flex size-[46px] items-center rounded-full border-2 border-[#dfeedd] bg-gradient-to-b from-[#5fd06a] to-[#2fae48] pl-0.5 text-xs font-bold text-white shadow-md ring-1 ring-[#8a9a8a]">
        60
      </button>
    </div>
  );
};

export default App;
